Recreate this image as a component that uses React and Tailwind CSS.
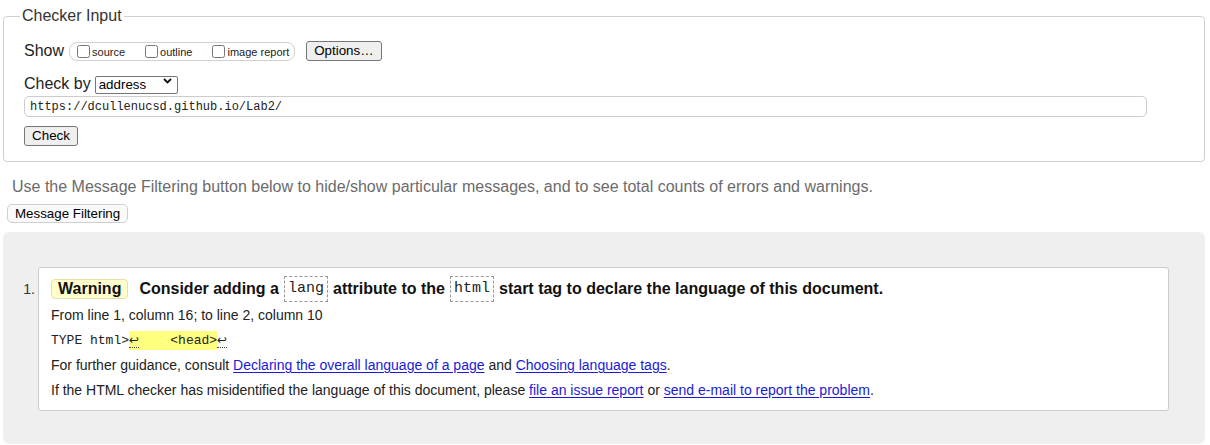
import { useState } from "react";

const btn =
  "h-[20px] rounded-[3px] border border-[#767676] bg-[#efefef] px-[7px] text-[13.33px] leading-[18px] text-black";

function Chevron() {
  return (
    <svg width="9" height="6" viewBox="0 0 9 6" className="pointer-events-none absolute right-[6px] top-[6px]">
      <path d="M1 1 L4.5 4.5 L8 1" fill="none" stroke="#111" strokeWidth="1.8" />
    </svg>
  );
}

function Code({ children }) {
  return (
    <span className="inline-block h-[26px] border border-dashed border-[#9a9a9a] px-[3px] font-['Liberation_Mono',monospace] text-[15px] font-normal leading-[24px] text-[#222]">
      {children}
    </span>
  );
}

function Link({ children }) {
  return (
    <a href="#" className="text-[#1a1ad8] underline underline-offset-[2px]">
      {children}
    </a>
  );
}

function Ret() {
  return (
    <span className="border-b border-dotted border-[#444] font-['DejaVu_Sans',sans-serif] text-[12px]">↩</span>
  );
}

export default function App() {
  const [show, setShow] = useState({ source: false, outline: false, image: false });
  const [url, setUrl] = useState("https://dcullenucsd.github.io/Lab2/");

  return (
    <div className="min-h-[445px] bg-white pl-[3px] pr-[5px] font-['Liberation_Sans',Arial,sans-serif] text-black">
      {/* CHECKER INPUT */}
      <fieldset className="mt-[7px] rounded-[4px] border border-[#cfcfcf] pb-[15px] pl-[20px]">
        <legend className="ml-[-4px] px-[2px] text-[16px] leading-[18px] text-[#333]">Checker Input</legend>

        <div className="mt-[16px] flex h-[20px] items-center">
          <span className="text-[16px] leading-[18px] text-[#222]">Show</span>
          <div className="ml-[5px] flex h-[19px] items-center rounded-[8px] border border-[#d0d0d0] pl-[3px] pr-[5px] text-[11px] text-[#222]">
            <label className="mr-[20px] flex items-center">
              <input
                type="checkbox"
                className="mr-[2px] ml-[4px] h-[13px] w-[13px]"
                checked={show.source}
                onChange={(e) => setShow({ ...show, source: e.target.checked })}
              />
              <span className="pt-[2px]">source</span>
            </label>
            <label className="mr-[20px] flex items-center">
              <input
                type="checkbox"
                className="mr-[2px] h-[13px] w-[13px]"
                checked={show.outline}
                onChange={(e) => setShow({ ...show, outline: e.target.checked })}
              />
              <span className="pt-[2px]">outline</span>
            </label>
            <label className="flex items-center">
              <input
                type="checkbox"
                className="mr-[2px] h-[13px] w-[13px]"
                checked={show.image}
                onChange={(e) => setShow({ ...show, image: e.target.checked })}
              />
              <span className="pt-[2px]">image report</span>
            </label>
          </div>
          <button type="button" className={`ml-[11px] ${btn}`}>
            Options…
          </button>
        </div>

        <div className="mt-[13px] flex h-[20px] items-center">
          <span className="text-[16px] leading-[18px] text-[#222]">Check by</span>
          <div className="relative ml-[4px]">
            <select className="h-[18px] w-[83px] appearance-none rounded-[2px] border border-[#767676] bg-white pl-[3px] text-[13.33px] leading-[16px] text-black">
              <option>address</option>
              <option>file upload</option>
              <option>text input</option>
            </select>
            <Chevron />
          </div>
        </div>

        <input
          type="text"
          value={url}
          onChange={(e) => setUrl(e.target.value)}
          className="mt-[2px] block h-[21px] w-[1123px] rounded-[5px] border border-[#cccccc] px-[5px] font-['Liberation_Mono',monospace] text-[12px] text-[#222]"
        />

        <button type="button" className={`mt-[9px] block w-[54px] px-0 ${btn}`}>
          Check
        </button>
      </fieldset>

      {/* FILTER HINT */}
      <p className="ml-[9px] mt-[16px] text-[16px] leading-[18px] text-[#6b6b6b]">
        Use the Message Filtering button below to hide/show particular messages, and to see total counts of errors and
        warnings.
      </p>
      <button
        type="button"
        className="ml-[4px] mt-[8px] block h-[19px] rounded-[5px] border border-[#cfcfcf] bg-[#fafafa] px-[7px] text-[13.33px] leading-[17px] text-black"
      >
        Message Filtering
      </button>

      {/* RESULTS */}
      <div className="mt-[9px] rounded-[6px] bg-[#efefef] pb-[33px] pr-[36px] pt-[35px]">
        <div className="flex">
          <span className="w-[35px] shrink-0 pr-[3px] pt-[14px] text-right text-[14px] leading-[16px] text-[#333]">1.</span>

          <div className="flex-1 rounded-[3px] border border-[#cccccc] bg-white pb-[7px] pl-[12px] pt-[8px]">
            <div className="flex h-[26px] items-center gap-[5px] text-[16px] font-bold text-[#111]">
              <span className="mr-[6px] h-[20px] rounded-[4px] border border-[#e6dfa6] bg-[#ffffcc] px-[6px] leading-[18px]">
                Warning
              </span>
              <span>Consider adding a</span>
              <Code>lang</Code>
              <span>attribute to the</span>
              <Code>html</Code>
              <span>start tag to declare the language of this document.</span>
            </div>

            <div className="mt-[1px] text-[14px] leading-[25px] text-[#222]">
              <p>From line 1, column 16; to line 2, column 10</p>
              <p className="font-['Liberation_Mono',monospace] text-[13px] text-[#222]">
                TYPE html&gt;
                <span className="bg-[#ffff80] py-[2px] whitespace-pre">
                  <Ret />
                  {"    <head>"}
                </span>
                <Ret />
              </p>
              <p>
                For further guidance, consult <Link>Declaring the overall language of a page</Link> and{" "}
                <Link>Choosing language tags</Link>.
              </p>
              <p>
                If the HTML checker has misidentified the language of this document, please{" "}
                <Link>file an issue report</Link> or <Link>send e-mail to report the problem</Link>.
              </p>
            </div>
          </div>
        </div>
      </div>
    </div>
  );
}
